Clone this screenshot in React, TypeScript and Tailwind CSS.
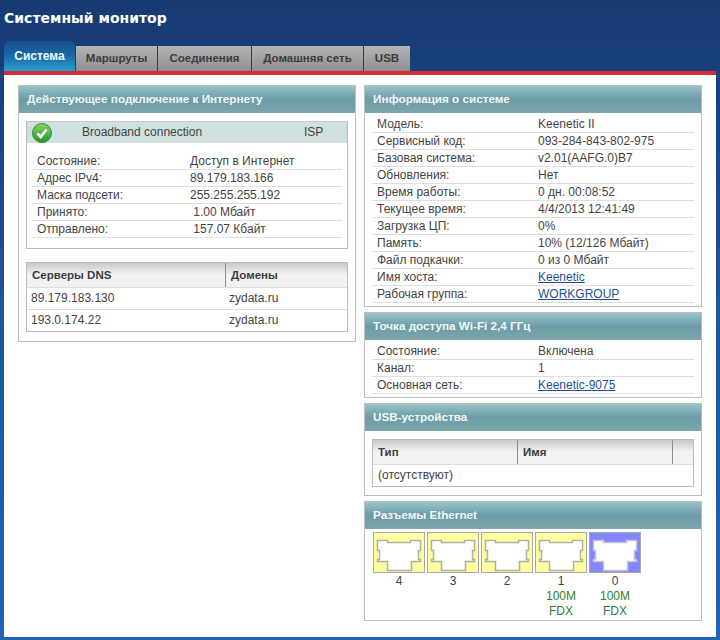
// System monitor page of the router web UI
const tabs = [
  { label: 'Маршруты', width: 'w-[81px]' },
  { label: 'Соединения', width: 'w-[93px]' },
  { label: 'Домашняя сеть', width: 'w-[111px]' },
  { label: 'USB', width: 'w-[46px]' },
]

const connectionRows = [
  ['Состояние:', 'Доступ в Интернет'],
  ['Адрес IPv4:', '89.179.183.166'],
  ['Маска подсети:', '255.255.255.192'],
  ['Принято:', '\u00a01.00 Мбайт'],
  ['Отправлено:', '\u00a0157.07 Кбайт'],
]

const systemRows = [
  ['Модель:', 'Keenetic II'],
  ['Сервисный код:', '093-284-843-802-975'],
  ['Базовая система:', 'v2.01(AAFG.0)B7'],
  ['Обновления:', 'Нет'],
  ['Время работы:', '0 дн. 00:08:52'],
  ['Текущее время:', '4/4/2013 12:41:49'],
  ['Загрузка ЦП:', '0%'],
  ['Память:', '10% (12/126 Мбайт)'],
  ['Файл подкачки:', '0 из 0 Мбайт'],
]

const ports = [
  { id: '4', active: false, up: false },
  { id: '3', active: false, up: false },
  { id: '2', active: false, up: false },
  { id: '1', active: false, up: true },
  { id: '0', active: true, up: true },
]

function Panel({ title, children }: { title: string; children: React.ReactNode }) {
  return (
    <section className="border border-[#bdbdbd] bg-white">
      <h2 className="h-[27px] pl-[8px] text-[11.7px] font-bold leading-[26px] text-[#f2f7f8] bg-gradient-to-b from-[#97c4ca] via-[#6d9ca6] to-[#7ba7ae]">
        {title}
      </h2>
      {children}
    </section>
  )
}

function InfoRow({ label, children }: { label: string; children: React.ReactNode }) {
  return (
    <div className="flex h-[17px] border-b border-[#dedede] pl-[5px] leading-[16px]">
      <div className="w-[161px] shrink-0">{label}</div>
      <div className="whitespace-pre">{children}</div>
    </div>
  )
}

function TableHead({ cells }: { cells: { label: string; width: string }[] }) {
  return (
    <div className="flex h-[24px] bg-gradient-to-b from-[#c9c9c9] via-[#f4f4f4] to-[#f1f1f1] text-[11.5px] font-bold leading-[24px] text-[#3c3c3c]">
      {cells.map((cell, i) => (
        <div key={i} className={`${cell.width} border-r border-[#8f8f8f] pl-[5px] last:border-r-0`}>
          {cell.label}
        </div>
      ))}
    </div>
  )
}

function StatusIcon() {
  return (
    <svg width="20" height="20" viewBox="0 0 20 20" className="block">
      <defs>
        <linearGradient id="ok" x1="0" y1="0" x2="0" y2="1">
          <stop offset="0" stopColor="#8fd35f" />
          <stop offset="1" stopColor="#1f9a2c" />
        </linearGradient>
      </defs>
      <circle cx="10" cy="10" r="9.5" fill="url(#ok)" stroke="#2f8a35" />
      <path d="M5.5 10.5 L8.7 14 L14.5 6.5" fill="none" stroke="#fff" strokeWidth="2.6" />
    </svg>
  )
}

function PortIcon({ active }: { active: boolean }) {
  return (
    <svg width="52" height="41" viewBox="0 0 52 41" className="block">
      <rect x="0.5" y="0.5" width="51" height="40" fill={active ? '#8585ff' : '#ffff9f'} stroke="#a8a8a8" />
      <path
        d="M4.5 8.5 H14.5 V10.5 H37.5 V8.5 H47.5 V18.5 H45.5 V27.5 H47.5 V29.5 H38.5 V38.5 H14.5 V29.5 H4.5 V27.5 H6.5 V18.5 H4.5 Z"
        fill="#fff"
        stroke={active ? '#c4c4d4' : '#b0b0a0'}
        strokeWidth="1.5"
      />
    </svg>
  )
}

export default function App() {
  return (
    <div className="h-[640px] w-[720px] overflow-hidden bg-gradient-to-b from-[#173a72] via-[#1e54a0] to-[#2263b5] font-['Liberation_Sans',Arial,sans-serif] text-[12px] text-[#444]">
      <h1 className="h-[41px] pl-[4px] pt-[8px] font-['DejaVu_Sans',Verdana,sans-serif] text-[14px] font-bold leading-[20px] text-white">
        Системный монитор
      </h1>

      <nav className="flex h-[30px] items-end gap-[1px] pl-[4px] font-bold">
        <div className="h-[30px] w-[71px] rounded-t-[6px] bg-gradient-to-b from-[#16508c] via-[#1a6aa8] to-[#2a9fd0] pt-[8px] text-center leading-[14px] text-[#eef6fa]">
          Система
        </div>
        {tabs.map((tab) => (
          <div
            key={tab.label}
            className={`${tab.width} h-[25px] bg-gradient-to-b from-[#b4b4b4] to-[#8f8f8f] pt-[5px] text-center text-[11.5px] leading-[14px] text-[#3d3d3d]`}
          >
            {tab.label}
          </div>
        ))}
      </nav>

      <main className="mx-[4px] h-[566px] border-t-[4px] border-[#d22f35] bg-white">
        <div className="flex items-start gap-[8px] px-[14px] pt-[10px]">
          <div className="w-[338px] shrink-0">
            <Panel title="Действующее подключение к Интернету">
              <div className="px-[7px] pb-[9px] pt-[8px]">
                <div className="h-[128px] border border-[#bcbcbc] border-t-[#c8c8c8]">
                  <div className="flex h-[21px] items-center bg-[#d0e0e0]">
                    <div className="ml-[5px] w-[50px] shrink-0">
                      <StatusIcon />
                    </div>
                    <div className="mb-[2px] w-[222px] shrink-0">Broadband connection</div>
                    <div className="mb-[2px]">ISP</div>
                  </div>
                  <div className="mx-[5px] pt-[10px] [&>div>div:first-child]:w-[153px]">
                    {connectionRows.map(([label, value]) => (
                      <InfoRow key={label} label={label}>
                        {value}
                      </InfoRow>
                    ))}
                  </div>
                </div>

                <div className="mt-[13px] border border-[#bcbcbc]">
                  <TableHead
                    cells={[
                      { label: 'Серверы DNS', width: 'w-[199px]' },
                      { label: 'Домены', width: 'flex-1' },
                    ]}
                  />
                  <div className="flex h-[22px] border-t border-[#dedede] pl-[4px] leading-[21px]">
                    <div className="w-[198px]">89.179.183.130</div>
                    <div>zydata.ru</div>
                  </div>
                  <div className="flex h-[22px] border-t border-[#dedede] pl-[4px] leading-[21px]">
                    <div className="w-[198px]">193.0.174.22</div>
                    <div>zydata.ru</div>
                  </div>
                </div>
              </div>
            </Panel>
          </div>

          <div className="flex w-[338px] shrink-0 flex-col gap-[5px]">
            <Panel title="Информация о системе">
              <div className="px-[7px] pb-[3px] pt-[3px]">
                {systemRows.map(([label, value]) => (
                  <InfoRow key={label} label={label}>
                    {value}
                  </InfoRow>
                ))}
                <InfoRow label="Имя хоста:">
                  <a className="text-[#1f4f96] underline">Keenetic</a>
                </InfoRow>
                <InfoRow label="Рабочая группа:">
                  <a className="text-[#1f4f96] underline">WORKGROUP</a>
                </InfoRow>
              </div>
            </Panel>

            <Panel title="Точка доступа Wi-Fi 2,4 ГГц">
              <div className="px-[7px] pb-[3px] pt-[3px]">
                <InfoRow label="Состояние:">Включена</InfoRow>
                <InfoRow label="Канал:">1</InfoRow>
                <InfoRow label="Основная сеть:">
                  <a className="text-[#1f4f96] underline">Keenetic-9075</a>
                </InfoRow>
              </div>
            </Panel>

            <Panel title="USB-устройства">
              <div className="px-[7px] pb-[8px] pt-[8px]">
                <div className="border border-[#bcbcbc]">
                  <TableHead
                    cells={[
                      { label: 'Тип', width: 'w-[145px]' },
                      { label: 'Имя', width: 'w-[155px]' },
                      { label: '', width: 'flex-1' },
                    ]}
                  />
                  <div className="h-[22px] border-t border-[#dedede] pl-[5px] leading-[21px]">(отсутствуют)</div>
                </div>
              </div>
            </Panel>

            <Panel title="Разъемы Ethernet">
              <div className="flex gap-[2px] pb-[1px] pl-[8px] pt-[3px]">
                {ports.map((port) => (
                  <div key={port.id} className="w-[52px] text-center leading-[15px]">
                    <PortIcon active={port.active} />
                    <div className="mt-[1px]">{port.id}</div>
                    {port.up ? (
                      <div className="text-[#2e7d2e]">
                        <div>100M</div>
                        <div>FDX</div>
                      </div>
                    ) : null}
                  </div>
                ))}
              </div>
            </Panel>
          </div>
        </div>
      </main>
    </div>
  )
}
